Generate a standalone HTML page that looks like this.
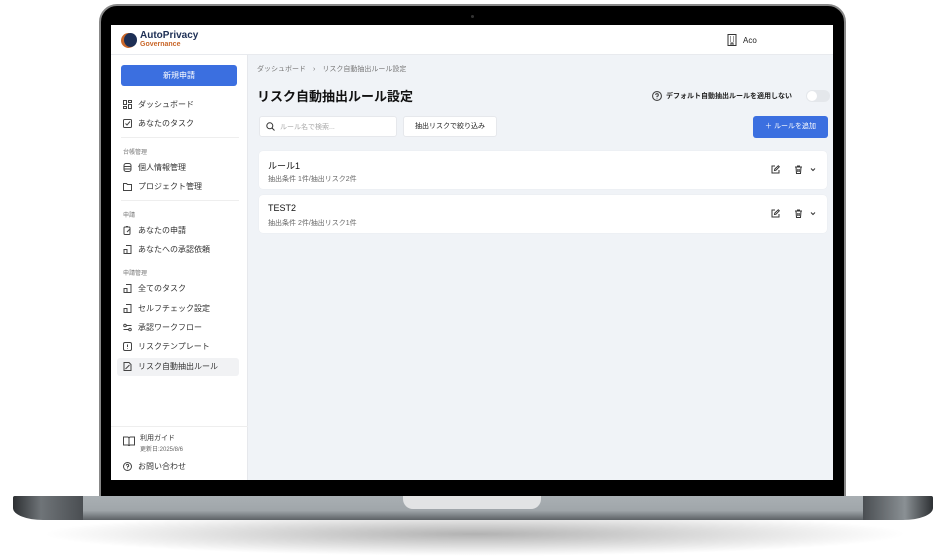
<!DOCTYPE html>
<html><head><meta charset="utf-8"><style>
*{box-sizing:border-box;margin:0;padding:0}
body{width:948px;height:556px;background:#fff;position:relative;overflow:hidden;font-family:"Liberation Sans","Noto Sans CJK JP",sans-serif;color:#222}
.abs{position:absolute}
.shadow{left:40px;top:512px;width:870px;height:44px;border-radius:50%;background:radial-gradient(ellipse at center,rgba(0,0,0,.3),rgba(0,0,0,0) 70%)}
.bezel{left:99px;top:4px;width:747px;height:496px;background:#000;border-radius:18px 18px 0 0;border:2px solid #888}
.base{left:13px;top:496px;width:920px;height:24px;background:linear-gradient(#a9afb3 0,#a0a6aa 60%,#5c6165 100%);border-radius:2px 2px 40px 40px / 2px 2px 14px 14px}
.baseL{left:13px;top:496px;width:70px;height:24px;background:linear-gradient(90deg,#2d3033,#6f7478 40%,#4a4e52);border-radius:2px 0 0 30px/2px 0 0 12px}
.baseR{left:863px;top:496px;width:70px;height:24px;background:linear-gradient(90deg,#4a4e52,#8a9094 60%,#2d3033);border-radius:0 2px 30px 0/0 2px 12px 0}
.notch{left:403px;top:496px;width:138px;height:13px;background:#e2e3e4;border-radius:0 0 10px 10px}
.screen{left:111px;top:25px;width:722px;height:455px;background:#f0f3f7;overflow:hidden}
.hdr{left:0;top:0;width:722px;height:30px;background:#fff;border-bottom:1px solid #e8eaee}
.side{left:0;top:30px;width:137px;height:425px;background:#fff;border-right:1px solid #e6e8ec}
.btn{left:10px;top:10px;width:116px;height:21px;background:#3b6fe0;color:#fff;border-radius:3px;font-size:8px;text-align:center;line-height:21px}
.it{left:12px;font-size:8px;color:#333;height:14px;line-height:14px;white-space:nowrap}
.it svg{vertical-align:-2px;margin-right:6px}
.sec{left:12px;font-size:6px;color:#777}
.hr{left:10px;width:118px;height:1px;background:#eee}
.card{left:148px;width:568px;height:38px;background:#fff;border-radius:4px;box-shadow:0 0 1px rgba(0,0,0,.08)}
.card b{position:absolute;left:9px;top:8px;font-size:9px;font-weight:normal;color:#111}
.card span{position:absolute;left:9px;top:23px;font-size:7px;color:#666}
.card svg{position:absolute;top:14px}
</style></head><body>
<div class="abs shadow"></div>
<div class="abs bezel"></div>
<div class="abs" style="left:471px;top:15px;width:3px;height:3px;border-radius:50%;background:#333"></div>
<div class="abs base"></div><div class="abs baseL"></div><div class="abs baseR"></div>
<div class="abs notch"></div>
<div class="abs screen">
 <div class="abs hdr">
  <div class="abs" style="left:10px;top:8px;width:15px;height:15px;border-radius:50%;background:#c9672a"></div>
  <div class="abs" style="left:13px;top:8px;width:13px;height:14px;border-radius:50%;background:#1d2f55"></div>
  <div class="abs" style="left:29px;top:5px;font-size:10px;font-weight:bold;color:#1d2f55">AutoPrivacy</div>
  <div class="abs" style="left:29px;top:16px;font-size:7px;font-weight:bold;color:#c9672a">Governance</div>
  <svg class="abs" style="left:616px;top:9px" width="10" height="12" viewBox="0 0 10 12" fill="none" stroke="#333" stroke-width="1"><rect x="1" y="0.5" width="8" height="11"/><path d="M3 3h1M6 3h1M3 5h1M6 5h1M3 7h1M6 7h1M4 11.5V9h2v2.5"/></svg>
  <div class="abs" style="left:632px;top:11px;font-size:8px">Aco</div>
 </div>
 <div class="abs side">
  <div class="abs btn">新規申請</div>
  <div class="abs it" style="top:43px"><svg width="9" height="9" viewBox="0 0 9 9" fill="none" stroke="#444"><rect x=".5" y=".5" width="3" height="4"/><rect x="5.5" y=".5" width="3" height="2"/><rect x=".5" y="6.5" width="3" height="2"/><rect x="5.5" y="4.5" width="3" height="4"/></svg>ダッシュボード</div>
  <div class="abs it" style="top:62px"><svg width="9" height="9" viewBox="0 0 9 9" fill="none" stroke="#444"><rect x=".5" y=".5" width="8" height="8" rx="1"/><path d="M2.5 4.5l1.5 1.5 3-3.5"/></svg>あなたのタスク</div>
  <div class="abs hr" style="top:82px"></div>
  <div class="abs sec" style="top:92px">台帳管理</div>
  <div class="abs it" style="top:106px"><svg width="9" height="9" viewBox="0 0 9 9" fill="none" stroke="#444"><rect x="1" y=".5" width="7" height="8" rx="2"/><path d="M1 3.5h7M1 6h7"/></svg>個人情報管理</div>
  <div class="abs it" style="top:125px"><svg width="9" height="9" viewBox="0 0 9 9" fill="none" stroke="#444"><path d="M.5 1.5h3l1 1h4v6h-8z"/></svg>プロジェクト管理</div>
  <div class="abs hr" style="top:145px"></div>
  <div class="abs sec" style="top:155px">申請</div>
  <div class="abs it" style="top:169px"><svg width="9" height="9" viewBox="0 0 9 9" fill="none" stroke="#444"><rect x="1" y="1" width="6" height="7.5" rx="1"/><path d="M3 .5h2M4 6l3-3"/></svg>あなたの申請</div>
  <div class="abs it" style="top:188px"><svg width="9" height="9" viewBox="0 0 9 9" fill="none" stroke="#444"><path d="M3 .5h5v8H3M1 4.5h3v4H1z"/></svg>あなたへの承認依頼</div>
  <div class="abs sec" style="top:213px">申請管理</div>
  <div class="abs it" style="top:227px"><svg width="9" height="9" viewBox="0 0 9 9" fill="none" stroke="#444"><path d="M3 .5h5v8H4M1 4.5h3v4H1z"/></svg>全てのタスク</div>
  <div class="abs it" style="top:247px"><svg width="9" height="9" viewBox="0 0 9 9" fill="none" stroke="#444"><path d="M3 .5h5v8H4M1 4.5h3v4H1z"/></svg>セルフチェック設定</div>
  <div class="abs it" style="top:266px"><svg width="9" height="9" viewBox="0 0 9 9" fill="none" stroke="#444"><circle cx="2" cy="2.5" r="1.3"/><circle cx="7" cy="6.5" r="1.3"/><path d="M3.5 2.5h5M.5 6.5h5"/></svg>承認ワークフロー</div>
  <div class="abs it" style="top:285px"><svg width="9" height="9" viewBox="0 0 9 9" fill="none" stroke="#444"><rect x=".5" y=".5" width="8" height="8" rx="1.5"/><path d="M4.5 2.5v2.5M4.5 6.3v.5"/></svg>リスクテンプレート</div>
  <div class="abs" style="left:6px;top:303px;width:122px;height:18px;background:#f1f2f4;border-radius:3px"></div>
  <div class="abs it" style="top:305px"><svg width="9" height="9" viewBox="0 0 9 9" fill="none" stroke="#444"><path d="M1 .5h5l2 2v6H1z"/><path d="M2.5 7l4-4"/></svg>リスク自動抽出ルール</div>
  <div class="abs hr" style="top:371px;left:0;width:137px"></div>
  <svg class="abs" style="left:12px;top:381px" width="12" height="10" viewBox="0 0 12 10" fill="none" stroke="#444"><path d="M.5 1h4.5l1 1 1-1h4.5v8h-4.5l-1 1-1-1H.5zM6 2v7"/></svg>
  <div class="abs" style="left:29px;top:378px;font-size:7px;color:#333">利用ガイド</div>
  <div class="abs" style="left:29px;top:389px;font-size:6px;color:#666">更新日:2025/8/6</div>
  <div class="abs it" style="top:405px"><svg width="9" height="9" viewBox="0 0 9 9" fill="none" stroke="#444"><circle cx="4.5" cy="4.5" r="4"/><path d="M3.3 3.5a1.2 1.2 0 1 1 1.2 1.3v.8M4.5 6.6v.5"/></svg>お問い合わせ</div>
 </div>
 <div class="abs" style="left:146px;top:39px;font-size:7px;color:#777">ダッシュボード　›　リスク自動抽出ルール設定</div>
 <div class="abs" style="left:146px;top:61px;font-size:13px;font-weight:bold;color:#111">リスク自動抽出ルール設定</div>
 <svg class="abs" style="left:541px;top:66px" width="10" height="10" viewBox="0 0 9 9" fill="none" stroke="#444"><circle cx="4.5" cy="4.5" r="4"/><path d="M3.3 3.5a1.2 1.2 0 1 1 1.2 1.3v.8M4.5 6.6v.5"/></svg>
 <div class="abs" style="left:555px;top:66px;font-size:7px;font-weight:bold;color:#222">デフォルト自動抽出ルールを適用しない</div>
 <div class="abs" style="left:695px;top:65px;width:24px;height:12px;border-radius:6px;background:#e4e7eb"></div>
 <div class="abs" style="left:696px;top:66px;width:10px;height:10px;border-radius:50%;background:#fff"></div>
 <div class="abs" style="left:148px;top:91px;width:138px;height:21px;background:#fff;border-radius:3px;border:1px solid #e6e8ec"></div>
 <svg class="abs" style="left:155px;top:97px" width="9" height="9" viewBox="0 0 9 9" fill="none" stroke="#333"><circle cx="3.8" cy="3.8" r="3"/><path d="M6 6l2.5 2.5"/></svg>
 <div class="abs" style="left:169px;top:97px;font-size:7px;color:#aaa">ルール名で検索...</div>
 <div class="abs" style="left:292px;top:91px;width:94px;height:21px;background:#fff;border-radius:3px;border:1px solid #e6e8ec;font-size:7px;text-align:center;line-height:19px">抽出リスクで絞り込み</div>
 <div class="abs" style="left:642px;top:91px;width:75px;height:22px;background:#3b6fe0;border-radius:3px;color:#fff;font-size:7px;text-align:center;line-height:22px">＋ ルールを追加</div>
 <div class="abs card" style="top:126px"><b>ルール1</b><span>抽出条件 1件/抽出リスク2件</span>
  <svg style="left:512px" width="9" height="9" viewBox="0 0 9 9" fill="none" stroke="#333"><path d="M4 1H1v7h7V5"/><path d="M3.5 5.5l.3-1.5L7.3.8l1 1L5 5.2z"/></svg>
  <svg style="left:535px" width="9" height="9" viewBox="0 0 9 9" fill="none" stroke="#333"><path d="M1 2h7M3.5 2V1h2v1M2 2l.5 6.5h4L7 2M3.8 4v3M5.2 4v3"/></svg>
  <svg style="left:551px;top:16px" width="6" height="5" viewBox="0 0 6 5" fill="none" stroke="#333"><path d="M1 1.5l2 2 2-2"/></svg></div>
 <div class="abs card" style="top:170px"><b>TEST2</b><span>抽出条件 2件/抽出リスク1件</span>
  <svg style="left:512px" width="9" height="9" viewBox="0 0 9 9" fill="none" stroke="#333"><path d="M4 1H1v7h7V5"/><path d="M3.5 5.5l.3-1.5L7.3.8l1 1L5 5.2z"/></svg>
  <svg style="left:535px" width="9" height="9" viewBox="0 0 9 9" fill="none" stroke="#333"><path d="M1 2h7M3.5 2V1h2v1M2 2l.5 6.5h4L7 2M3.8 4v3M5.2 4v3"/></svg>
  <svg style="left:551px;top:16px" width="6" height="5" viewBox="0 0 6 5" fill="none" stroke="#333"><path d="M1 1.5l2 2 2-2"/></svg></div>
</div>
</body></html>
